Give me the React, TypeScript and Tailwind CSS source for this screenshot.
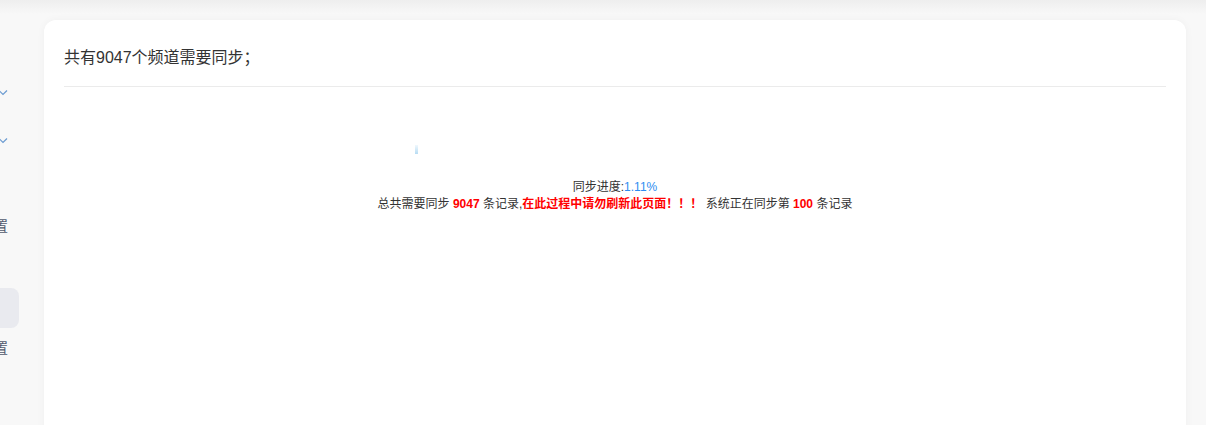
import React from 'react';

const font = { fontFamily: '"Liberation Sans", "Noto Sans CJK SC", sans-serif' };

function Chevron() {
	return (
		<svg width="10" height="7" viewBox="0 0 10 7" className="text-[#6b9bd1]">
			<path d="M1 1.5 L5 5.5 L9 1.5" fill="none" stroke="currentColor" strokeWidth="1.2" />
		</svg>
	);
}

function Sidebar() {
	return (
		<aside className="w-[44px] shrink-0 overflow-hidden flex justify-end">
			<div className="w-[200px] shrink-0 flex flex-col text-[14px] text-[#515a6e]">
				<div className="h-[72px]" />
				<div className="h-[40px] flex items-center pl-[154px]"><Chevron /></div>
				<div className="h-[8px]" />
				<div className="h-[40px] flex items-center pl-[154px]"><Chevron /></div>
				<div className="h-[40px] flex items-center pl-[150px]">
					<span className="w-[6px] h-[2px] bg-[#bfe8f5]" />
				</div>
				<div className="h-[52px] flex items-center pl-[136px]">
					<span>设置</span>
				</div>
				<div className="h-[36px] flex items-center pl-[150px]">
					<span className="w-[6px] h-[2px] bg-[#bfe8f5]" />
				</div>
				<div className="h-[40px] mr-[25px] rounded-[8px] bg-[#e9eaef] flex items-center pl-[150px]">
					<span className="w-[6px] h-[2px] bg-[#bfe8f5]" />
				</div>
				<div className="h-[40px] flex items-center pl-[136px]">
					<span>设置</span>
				</div>
			</div>
		</aside>
	);
}

export default function App() {
	return (
		<div
			className="h-[425px] w-[1206px] overflow-hidden flex bg-[linear-gradient(#eeeeee,#f8f8f8_14px)]"
			style={font}
		>
			<Sidebar />
			<main className="flex-1 pt-[20px] pr-[20px]">
				<div className="h-[440px] rounded-[12px] bg-white shadow-[0_0_8px_rgba(0,0,0,0.04)] px-[20px]">
					<div className="h-[67px] border-b border-[#ebebeb] flex items-center pt-[10px] text-[16px] text-[#333]">
						共有9047个频道需要同步；
					</div>
					<div className="pt-[58px] pl-[351px]">
						<div className="w-[3px] h-[9px] bg-[linear-gradient(#f0f8fd,#b7dcf3)]" />
					</div>
					<div className="pt-[25px] text-center text-[12px] leading-[17px] text-[#333]">
						<div>
							同步进度:<span className="text-[#2d8cf0]">1.11%</span>
						</div>
						<div>
							总共需要同步 <b className="text-[#ff0000]">9047</b> 条记录,
							<b className="text-[#ff0000]">在此过程中请勿刷新此页面！！！</b> 系统正在同步第{' '}
							<b className="text-[#ff0000]">100</b> 条记录
						</div>
					</div>
				</div>
			</main>
		</div>
	);
}
